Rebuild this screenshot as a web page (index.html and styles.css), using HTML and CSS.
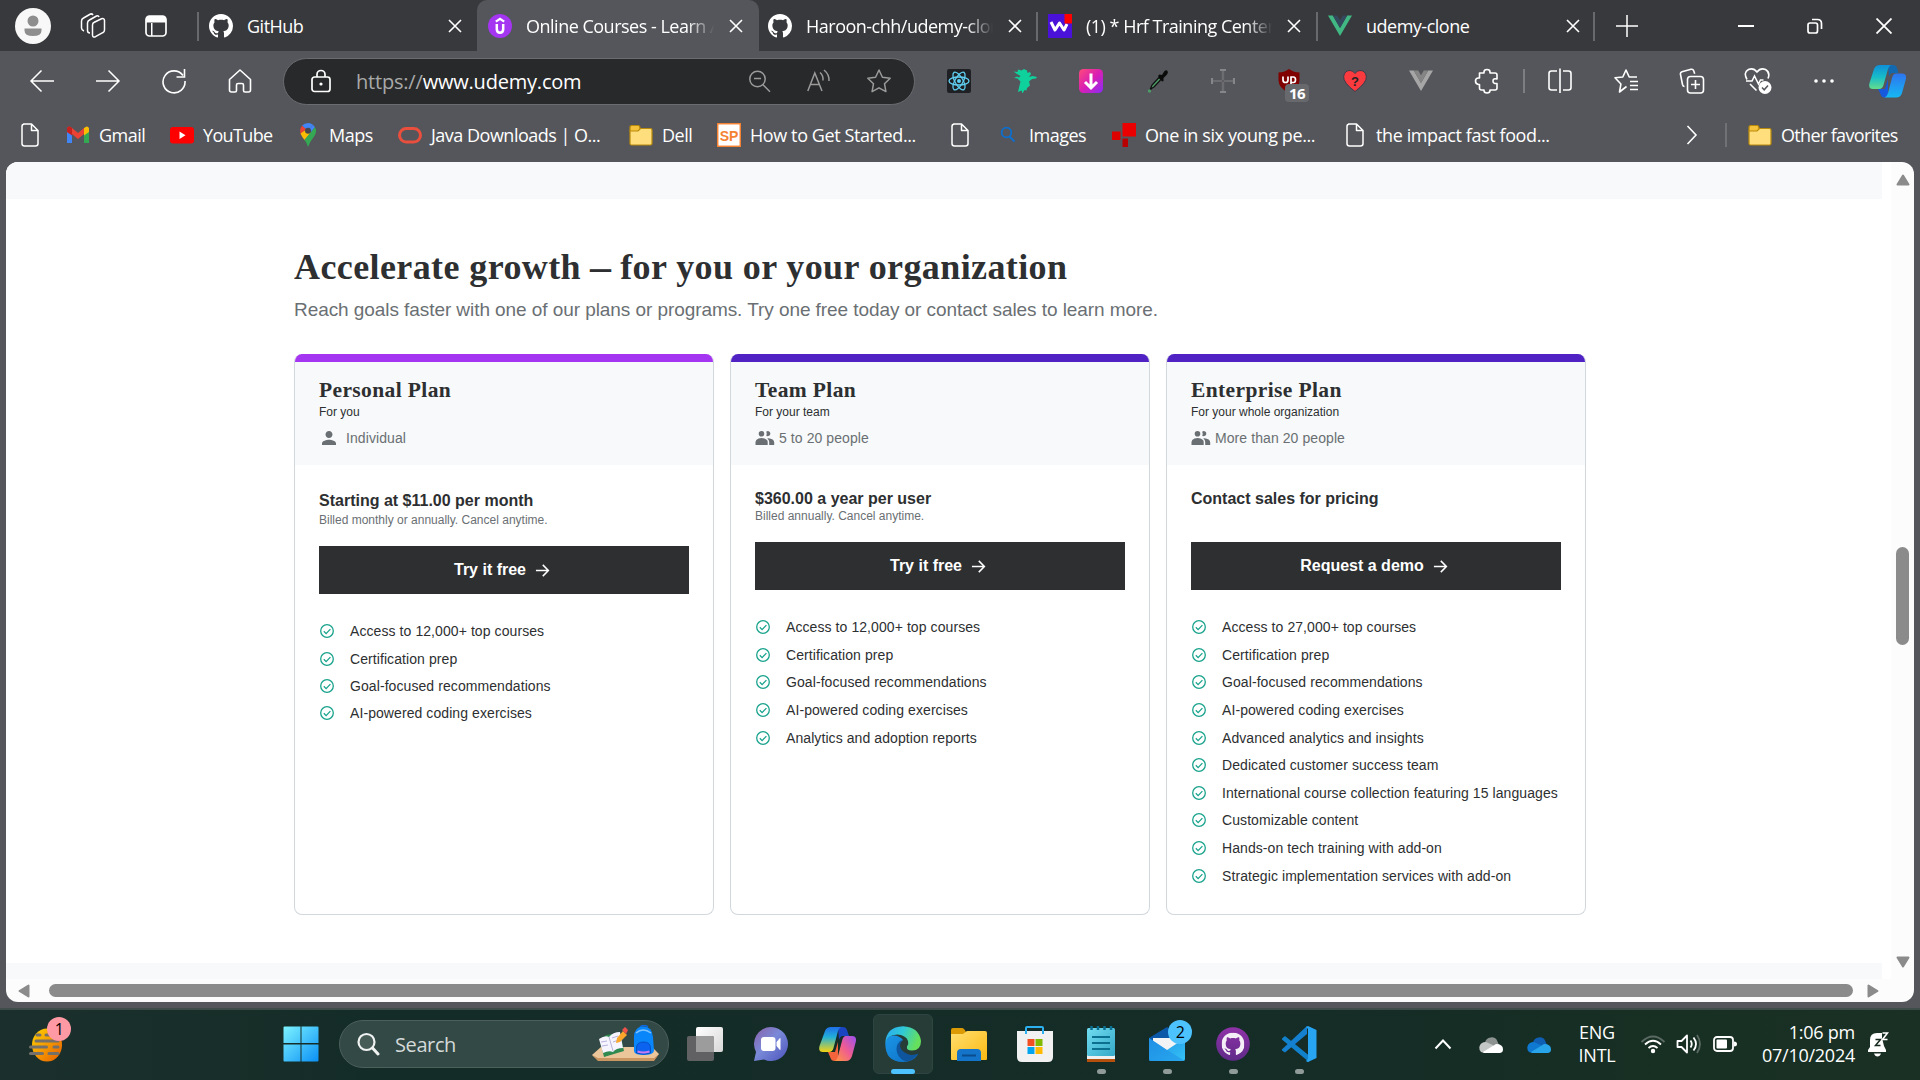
FILE: index.html
```html
<!DOCTYPE html>
<html lang="en">
<head>
<meta charset="utf-8">
<title>Online Courses - Learn Anything</title>
<link rel="stylesheet" href="styles.css">
</head>
<body>
<svg class="defs" width="0" height="0" aria-hidden="true">
  <defs>
    <linearGradient id="g-start" x1="0" y1="0" x2="1" y2="1"><stop offset="0" stop-color="#7df3ff"/><stop offset="1" stop-color="#0a90f5"/></linearGradient>
    <linearGradient id="g-burger" x1="0" y1="0" x2="1" y2="1"><stop offset="0" stop-color="#ffd400"/><stop offset="1" stop-color="#e85c00"/></linearGradient>
    <linearGradient id="g-chat" x1="0" y1="0" x2="1" y2="1"><stop offset="0" stop-color="#8b5fa8"/><stop offset=".45" stop-color="#7a8ad8"/><stop offset="1" stop-color="#4b53bc"/></linearGradient>
    <linearGradient id="g-copl" x1="0" y1="0" x2="0" y2="1"><stop offset="0" stop-color="#1f6fe8"/><stop offset=".4" stop-color="#22b0d8"/><stop offset="1" stop-color="#f5d312"/></linearGradient>
    <linearGradient id="g-copr" x1="1" y1="0" x2="0" y2="1"><stop offset="0" stop-color="#9a50f0"/><stop offset=".5" stop-color="#ef5c92"/><stop offset="1" stop-color="#ff9a3c"/></linearGradient>
    <linearGradient id="g-cbl" x1="0" y1="0" x2="0" y2="1"><stop offset="0" stop-color="#0e8fd8"/><stop offset=".5" stop-color="#17bcc9"/><stop offset="1" stop-color="#63dd8c"/></linearGradient>
    <linearGradient id="g-cbr" x1="0" y1="0" x2="0" y2="1"><stop offset="0" stop-color="#2e74ee"/><stop offset="1" stop-color="#16b8f4"/></linearGradient>
    <linearGradient id="g-edge" x1="0" y1="0" x2="1" y2=".3"><stop offset="0" stop-color="#2aa8f2"/><stop offset=".5" stop-color="#2fc8d8"/><stop offset="1" stop-color="#66e05c"/></linearGradient>
    <linearGradient id="g-edge2" x1="0" y1="0" x2="1" y2="1"><stop offset="0" stop-color="#1b95e6"/><stop offset="1" stop-color="#0c6fc4"/></linearGradient>
    <linearGradient id="g-folder" x1="0" y1="0" x2="1" y2="1"><stop offset="0" stop-color="#ffdf70"/><stop offset="1" stop-color="#fcb912"/></linearGradient>
    <linearGradient id="g-note" x1="0" y1="0" x2="1" y2="1"><stop offset="0" stop-color="#72dcf0"/><stop offset="1" stop-color="#34a9c8"/></linearGradient>
    <linearGradient id="g-dl" x1="0" y1="0" x2="1" y2="1"><stop offset="0" stop-color="#ff4a7a"/><stop offset=".5" stop-color="#d91fb4"/><stop offset="1" stop-color="#8a2cf5"/></linearGradient>
    <linearGradient id="g-mail" x1="0" y1="0" x2="1" y2="1"><stop offset="0" stop-color="#1f90e6"/><stop offset="1" stop-color="#35c3f5"/></linearGradient>
    <linearGradient id="g-gh" x1="0" y1="0" x2="0" y2="1"><stop offset="0" stop-color="#8f32a8"/><stop offset="1" stop-color="#5f2a88"/></linearGradient>
    <linearGradient id="g-task" x1="0" y1="0" x2="1" y2="1"><stop offset="0" stop-color="#ffffff"/><stop offset="1" stop-color="#d8d8d8"/></linearGradient>
  </defs>
  <symbol id="github" viewBox="0 0 16 16"><path d="M8 0C3.58 0 0 3.58 0 8c0 3.54 2.29 6.53 5.47 7.59.4.07.55-.17.55-.38 0-.19-.01-.82-.01-1.49-2.01.37-2.53-.49-2.69-.94-.09-.23-.48-.94-.82-1.13-.28-.15-.68-.52-.01-.53.63-.01 1.08.58 1.23.82.72 1.21 1.87.87 2.33.66.07-.52.28-.87.51-1.07-1.78-.2-3.64-.89-3.64-3.95 0-.87.31-1.59.82-2.15-.08-.2-.36-1.02.08-2.12 0 0 .67-.21 2.2.82.64-.18 1.32-.27 2-.27.68 0 1.36.09 2 .27 1.53-1.04 2.2-.82 2.2-.82.44 1.1.16 1.92.08 2.12.51.56.82 1.27.82 2.15 0 3.07-1.87 3.75-3.65 3.95.29.25.54.73.54 1.48 0 1.07-.01 1.93-.01 2.2 0 .21.15.46.55.38A8.013 8.013 0 0016 8c0-4.42-3.58-8-8-8z"/></symbol>
  <symbol id="close" viewBox="0 0 14 14"><path d="M1 1l12 12M13 1L1 13" fill="none" stroke="#fff" stroke-width="1.6"/></symbol>
  <symbol id="page" viewBox="0 0 24 24"><path d="M5.500 1h8l6.500 6.500v13a2.500 2.500 0 0 1-2.500 2.500h-11a2.500 2.500 0 0 1-2.500-2.500v-17a2.500 2.500 0 0 1 2.500-2.500zM13.500 1v6.500h6.500" fill="none" stroke="#fff" stroke-width="1.500" stroke-linejoin="round"/></symbol>
  <symbol id="folder" viewBox="0 0 24 24"><path d="M1 4.500q0-2 2-2h6q2 0 2 3v3H1z" fill="#f5c23c" stroke="#b98a0c" stroke-width="1.200"/><path d="M1 8h8l2.500-2.500h10q1.500 0 1.500 1.500v13.500q0 1.500-1.500 1.500h-19q-1.500 0-1.500-1.500z" fill="#ffde7d" stroke="#b98a0c" stroke-width="1.200"/></symbol>
  <symbol id="check" viewBox="0 0 16 16"><g fill="none" stroke="#19a38c" stroke-width="1.300"><circle cx="8" cy="8" r="6.300"/><path d="M4.800 8.300l2.300 2.300 4.300-4.500"/></g></symbol>
  <symbol id="arrow" viewBox="0 0 16 16"><path d="M1 8h13M8.300 2l6 6-6 6" fill="none" stroke="#fff" stroke-width="1.600"/></symbol>
  <symbol id="group" viewBox="0 0 20 16"><path d="M6.500 1a2.800 2.800 0 0 1 0 5.600a2.800 2.800 0 0 1 0-5.600zM13 1a2.600 2.600 0 1 1-1.800 4.700q1-1.900 0-4A2.600 2.600 0 0 1 13 1zM.5 12q0-2.300 3-3.400 3.200-1 6 0Q12.700 9.700 12.700 12v3H.500zM13.300 8.300q5.700.5 5.900 4v2.700h-5v-3q0-2.200-2-3.500z" fill="#6a6f73"/></symbol>
  <symbol id="person" viewBox="4 4 16 16"><path d="M12 12c2.210 0 4-1.790 4-4s-1.790-4-4-4-4 1.790-4 4 1.790 4 4 4zm0 2c-2.670 0-8 1.340-8 4v2h16v-2c0-2.660-5.330-4-8-4z" fill="#6a6f73"/></symbol>
  <symbol id="cloud-back" viewBox="0 0 24 17"><path d="M6 7a6.500 6.500 0 0 1 12.500-1.500L20 9 7 10z"/></symbol>
</svg>

<header class="tabstrip">
  <div class="tab-tools">
    <svg class="avatar" viewBox="0 0 36 36"><circle cx="18" cy="18" r="18" fill="#f8f8f8"/><circle cx="18" cy="13" r="5.500" fill="#8e8e8e"/><path d="M9.500 20.500h17v2q0 5.500-8.500 5.500t-8.500-5.500z" fill="#8e8e8e"/></svg>
    <svg class="ic26" viewBox="0 0 26 26"><g fill="none" stroke="#fff" stroke-width="1.500" stroke-linejoin="round"><path d="M12.500 12q0-2 1.800-2.800l7.200-3.400q3-.8 3 1.800v9.500q0 1.800-1.800 2.600l-7.200 4q-3 1-3-1.600z"/><path d="M10 20q-2.500 0-2.500-2.500V10q0-2 2-3l7-4q2-.6 2.500 1"/><path d="M4 18q-2.500-1-2.500-3V8q0-2 2-3l7-4q1.500-.5 2.500 1"/></g></svg>
    <svg class="ic24" viewBox="0 0 24 24"><rect x="2" y="2" width="20" height="20" rx="3.500" fill="none" stroke="#fff" stroke-width="1.700"/><path d="M2 8.500V5q0-3 3-3h14q3 0 3 3v3.500zM7 8v14h1.500V8z" fill="#fff"/></svg>
  </div>
  <div class="tab edge-left">
    <svg class="ic24 white"><use href="#github"/></svg><span class="tab-title ui">GitHub</span><svg class="x"><use href="#close"/></svg>
  </div>
  <div class="tab active">
    <svg class="ic24" viewBox="0 0 24 24"><circle cx="12" cy="12" r="12" fill="#a435f0"/><path d="M7.800 7.600L12 4.800l4.200 2.800" fill="none" stroke="#fff" stroke-width="2.200"/><path d="M8.800 10v5q0 3.700 3.200 3.700t3.200-3.700v-5" fill="none" stroke="#fff" stroke-width="2.500"/></svg><span class="tab-title ui faded">Online Courses - Learn Anything</span><svg class="x"><use href="#close"/></svg>
  </div>
  <div class="tab after-active">
    <svg class="ic24 white"><use href="#github"/></svg><span class="tab-title ui faded">Haroon-chh/udemy-clone</span><svg class="x"><use href="#close"/></svg>
  </div>
  <div class="tab edge-left">
    <svg class="ic24" viewBox="0 0 24 24"><path d="M0 0h24v24H0z" fill="#4a12d8"/><path d="M3 8l4 8 4.500-7 4.500 7 3-6" fill="none" stroke="#fff" stroke-width="3" stroke-linejoin="round"/><path d="M16.500 0H24v9.500h-7.500z" fill="#f00"/></svg><span class="tab-title ui faded">(1) * Hrf Training Center - web</span><svg class="x"><use href="#close"/></svg>
  </div>
  <div class="tab edge-left edge-right">
    <svg class="ic24" viewBox="0 0 24 24"><path d="M0 1.500h4.800L12 14l7.200-12.500H24L12 22z" fill="#41b883"/><path d="M4.800 1.500h4.400L12 6.300l2.800-4.800h4.400L12 14z" fill="#35495e"/></svg><span class="tab-title ui">udemy-clone</span><svg class="x"><use href="#close"/></svg>
  </div>
  <svg class="plus" viewBox="0 0 22 22"><path d="M11 0v22M0 11h22" stroke="#fff" stroke-width="1.500"/></svg>
  <div class="win-buttons">
    <svg class="ic16" viewBox="0 0 16 16"><path d="M0 8h16" stroke="#fff" stroke-width="2"/></svg>
    <svg class="ic16" viewBox="0 0 16 16"><rect x="1" y="5" width="9.500" height="10" rx="2" fill="none" stroke="#fff" stroke-width="1.700"/><path d="M5 1.500h5.500q4 0 4 4V11" fill="none" stroke="#fff" stroke-width="1.700"/></svg>
    <svg class="ic16" viewBox="0 0 16 16"><path d="M.5.500l15 15M15.500.500l-15 15" stroke="#fff" stroke-width="1.800"/></svg>
  </div>
</header>

<nav class="toolbar">
  <span class="btn"><svg class="ic26" viewBox="0 0 26 26"><path d="M25 13H2M12.500 2.500L2 13l10.500 10.500" fill="none" stroke="#fff" stroke-width="1.500"/></svg></span>
  <span class="btn"><svg class="ic26" viewBox="0 0 26 26"><path d="M1 13h23M13.500 2.500L24 13 13.500 23.500" fill="none" stroke="#fff" stroke-width="1.500"/></svg></span>
  <span class="btn"><svg class="ic26" viewBox="0 0 26 26"><path d="M22 7.500A11 11 0 1 0 24 13M23.500 1v8h-8" fill="none" stroke="#fff" stroke-width="1.600"/></svg></span>
  <span class="btn"><svg class="ic26" viewBox="0 0 26 26"><path d="M2.500 11.500L13 2l10.500 9.500V22q0 2-2 2h-3.500q-1.500 0-1.500-1.500V17q0-1.500-1.500-1.500h-4Q9.500 15.500 9.500 17v5.500Q9.500 24 8 24H4.500q-2 0-2-2z" fill="none" stroke="#fff" stroke-width="1.600" stroke-linejoin="round"/></svg></span>
  <div class="omnibox">
    <svg class="ic24" viewBox="0 0 24 24"><rect x="3" y="8" width="18" height="14.500" rx="2.500" fill="none" stroke="#fff" stroke-width="1.700"/><path d="M8 8V5.500a4 4 0 0 1 8 0V8" fill="none" stroke="#fff" stroke-width="1.700"/><circle cx="12" cy="15" r="1.600" fill="#fff"/></svg>
    <span class="url"><span class="scheme">https://</span>www.udemy.com</span>
    <span class="omni-actions">
      <svg class="ic24" viewBox="0 0 24 24"><g fill="none" stroke="#9b9b9b" stroke-width="1.500"><circle cx="9.500" cy="10" r="7.700"/><path d="M15 15.800l7 7M6 9.500h7"/></g></svg>
      <svg class="ic24" viewBox="0 0 24 24"><g fill="none" stroke="#9b9b9b" stroke-width="1.500"><path d="M.8 22L7.800 4l7.200 18M3.500 15.500h8.800M13 3.500q3.500 3 3 8M17 1q5.500 4.500 5 11"/></g></svg>
      <svg class="ic26" viewBox="0 0 26 26"><path d="M13 2l3.400 7.200 7.800 1-5.700 5.500 1.400 7.900-6.900-3.800-6.900 3.800 1.400-7.900L1.800 10.200l7.800-1z" fill="none" stroke="#9b9b9b" stroke-width="1.500" stroke-linejoin="round"/></svg>
    </span>
  </div>
  <span class="btn"><svg class="ic24" viewBox="0 0 24 24"><rect width="24" height="24" rx="2" fill="#1f2024"/><g fill="none" stroke="#5fd0f2" stroke-width="1.300"><ellipse cx="12" cy="12" rx="10" ry="4"/><ellipse cx="12" cy="12" rx="10" ry="4" transform="rotate(60 12 12)"/><ellipse cx="12" cy="12" rx="10" ry="4" transform="rotate(120 12 12)"/></g><circle cx="12" cy="12" r="2" fill="#5fd0f2"/></svg></span>
  <span class="btn"><svg class="ic24" viewBox="0 0 24 24"><path d="M.5 2.500l4 .5L5 .5l3.500 1L11 0l3 1.500.5 2.500L17 3l1 2-2 3 3.500-1 4.500 1-1 1.500-4 .5-3 2.500 1 4-3 2.500-.5 2.500-2-.5-2 3.500-1-3-3.500 1.500L6 18.500l1.500-6-3-3L1 9l3-1.500 2 1 1.500-1.500L4 5z" fill="#0fd19c"/></svg></span>
  <span class="btn"><svg class="ic24" viewBox="0 0 24 24"><rect width="24" height="24" rx="4.500" fill="url(#g-dl)"/><path d="M12 4.500v14M6 13l6 6 6-6" fill="none" stroke="#fff" stroke-width="3"/></svg></span>
  <span class="btn"><svg class="ic24" viewBox="0 0 24 24"><path d="M5 21l2-5 7-7.500 2 2-7 7.500-2.500 1.500z" fill="#4d9b67" stroke="#111" stroke-width="1.300"/><circle cx="4.500" cy="22" r="1.700" fill="#4d9b67"/><path d="M13 7l1.500-1.500L17 6l2.500-4q2-1.500 3 0t-.5 3.500L18.500 9v3L17 12.500z" fill="#0a0a0a"/></svg></span>
  <span class="btn"><svg class="ic24" viewBox="0 0 24 24"><path d="M12 1v22M1 12h22M9 1h6M9 23h6M1 9v6M23 9v6" stroke="#85868a" stroke-width="2.200" fill="none"/><path d="M12 2v20M2 12h20" stroke="#46474b" stroke-width=".8"/></svg></span>
  <span class="btn ublock"><svg class="ic24" viewBox="0 0 24 24"><path d="M12 0q5 3.500 10.500 3.500v8q0 7.500-10.500 12.500Q1.500 19 1.500 11.500v-8Q7 3.500 12 0z" fill="#800000"/><path d="M6 7.500v3.500q0 2.500 2.500 2.500T11 11V7.500M14 15V8h2.500q2 0 2 2.700t-2 2.800H14" fill="none" stroke="#fff" stroke-width="1.700"/></svg><b class="count">16</b></span>
  <span class="btn"><svg class="ic24" viewBox="0 0 24 24"><path d="M12 22.500Q0 13.500.7 7.500 1.500 1.500 7 1.500q3 0 5 3 2-3 5-3 5.500 0 6.300 6Q24 13.500 12 22.500z" fill="#f93b3f" stroke="#333a4a" stroke-width=".9"/><text x="12" y="17" class="qmark">?</text></svg></span>
  <span class="btn"><svg class="ic24" viewBox="0 0 24 24"><path d="M0 1.500h4.800L12 14l7.200-12.500H24L12 22z" fill="#a6a6a6"/><path d="M4.800 1.500h4.400L12 6.300l2.800-4.800h4.400L12 14z" fill="#858585"/></svg></span>
  <span class="btn"><svg class="ic26" viewBox="0 0 26 26"><path d="M5.500 5H10V4q0-2.500 3-2.500T16 4v1h5q2 0 2 2v4q-4-1-4 2t4 2.500V20q0 2-2 2h-5v.5q0 2.500-3 2.500t-3-2.500V22H7.500q-2 0-2-2v-3.500H4.500Q1.500 16 1.500 13t3-3h1z" fill="none" stroke="#fff" stroke-width="1.600" stroke-linejoin="round"/></svg></span>
  <i class="bar"></i>
  <span class="btn"><svg class="ic26" viewBox="0 0 26 26"><path d="M10 3H4.500Q2 3 2 5.500v14Q2 22 4.500 22H10M16 3h5.500Q24 3 24 5.500v14q0 2.500-2.500 2.500H16M13 .5V25" fill="none" stroke="#fff" stroke-width="1.600"/></svg></span>
  <span class="btn"><svg class="ic26" viewBox="0 0 26 26"><path d="M13.500 18.500L6.500 24l1.400-8L2 9.800l7.800-.8L13 2l3.200 7H24M17 13.500h8M17 17.500h8M17 21.500h8" fill="none" stroke="#fff" stroke-width="1.600" stroke-linejoin="round"/></svg></span>
  <span class="btn"><svg class="ic26" viewBox="0 0 26 26"><g fill="none" stroke="#fff" stroke-width="1.600"><rect x="8.500" y="8.500" width="16" height="16.500" rx="3"/><path d="M16.500 12v9M12 16.500h9M5.500 18.500q-1.500 0-2-2L1.500 6.500q-.5-2 1.500-2.700l9-2.500q2-.5 2.700 1.500l1 3"/></g></svg></span>
  <span class="btn"><svg class="ic28" viewBox="0 0 28 28"><path d="M3 12.500q-4-7 1.500-10 5-2 8.500 2.500 3.500-4.500 8.500-2.500 5 3 2.500 9M2 14h6l2.500-5 4 8 2-4h3M6 17l6.500 6.500" fill="none" stroke="#fff" stroke-width="1.600"/><circle cx="21" cy="20.500" r="6.500" fill="#fff"/><path d="M18 20.500l2.200 2.300 3.800-4.300" fill="none" stroke="#55565b" stroke-width="1.500"/></svg></span>
  <span class="btn"><svg class="ic24" viewBox="0 0 24 24"><g fill="#fff"><circle cx="4" cy="12" r="1.800"/><circle cx="12" cy="12" r="1.800"/><circle cx="20" cy="12" r="1.800"/></g></svg></span>
  <span class="copilot"><svg width="37" height="33" viewBox="0 0 37 33"><path d="M19 0h5q3 0 4 3l1.500 5H24q-3 0-4 4z" fill="#1369b0"/><path d="M9 24h7l3-10v15q-1 3.500-3.500 3.500-3 0-4-3.500z" fill="#1659dc"/><path d="M5 4q1.500-4 6-4h11q-2 1-3 4l-4.500 16q-1 4-4.500 4H4q-5 0-3.500-6z" fill="url(#g-cbl)"/><path d="M27 8.500h6q5.500 0 3.500 7L33 28q-1.500 4.500-6 4.500H15.500q2.500-1 3.500-4.500l4-15q1-4.500 4-4.500z" fill="url(#g-cbr)"/></svg></span>
</nav>

<nav class="bookmarks ui">
  <span class="bm"><svg class="ic24"><use href="#page"/></svg></span>
  <span class="bm"><svg class="ic24" viewBox="0 0 24 24"><path d="M1 5.500V20h5V10.500z" fill="#4285f4"/><path d="M23 5.500V20h-5V10.500z" fill="#34a853"/><path d="M1 9V6Q1 3.500 3.500 3.500L6 5l6 5 6-5v6l-6 5-6-5z" fill="#ea4335"/><path d="M1 9V6q0-2.500 2.500-2.500L6 5v7.500z" fill="#c5221f"/><path d="M23 9V6q0-2.500-2.500-2.500L18 5v7.500z" fill="#fbbc04"/></svg><span>Gmail</span></span>
  <span class="bm tight"><svg class="ic24" viewBox="0 0 24 24"><rect y="4" width="24" height="16.500" rx="3" fill="#f00"/><path d="M9.500 8.500v7.500l6-3.700z" fill="#fff"/></svg><span>YouTube</span></span>
  <span class="bm"><svg class="ic24" viewBox="0 0 24 24"><path d="M12 0a8 8 0 0 0-6 2.800l6 5.200 5-6.300A8 8 0 0 0 12 0z" fill="#4285f4"/><path d="M6 2.800Q3 6.500 4.800 11.500L10 6z" fill="#ea4335"/><path d="M4.500 10.500Q6 14 8.500 17l6.500-7.500-4-3.500z" fill="#fbbc04"/><path d="M18.800 4Q22 9 17 15q-3 3.500-5 9-1-4-3.500-7z" fill="#34a853"/><path d="M12 8l5-6.300L18.800 4 15 9z" fill="#4285f4"/><circle cx="12" cy="7.700" r="3" fill="#47484d"/></svg><span>Maps</span></span>
  <span class="bm"><svg class="ic24" viewBox="0 0 24 24"><rect x="1.500" y="5.500" width="21" height="13.500" rx="6.700" fill="none" stroke="#ea4e3c" stroke-width="3"/></svg><span>Java Downloads | O...</span></span>
  <span class="bm"><svg class="ic24"><use href="#folder"/></svg><span>Dell</span></span>
  <span class="bm loose"><svg class="ic24" viewBox="0 0 24 24"><rect x=".7" y=".7" width="22.600" height="22.600" fill="#fff" stroke="#f58232" stroke-width="1.500"/><text x="12" y="17.500" class="sp">SP</text></svg><span>How to Get Started...</span></span>
  <span class="bm"><svg class="ic24"><use href="#page"/></svg></span>
  <span class="bm"><svg class="ic24" viewBox="0 0 24 24"><circle cx="10.500" cy="9.500" r="4.800" fill="none" stroke="#0c6fd0" stroke-width="1.800"/><path d="M13.500 13.500l5 5" stroke="#0c6fd0" stroke-width="2"/></svg><span>Images</span></span>
  <span class="bm loose"><svg class="ic24" viewBox="0 0 24 24"><path d="M10.500 0H24v13.500H10.500z" fill="#ea0000"/><path d="M0 8.500h8.500V17H0z" fill="#d00"/><path d="M10.500 15.500H16V24h-5.500z" fill="#b80000"/></svg><span>One in six young pe...</span></span>
  <span class="bm loose"><svg class="ic24"><use href="#page"/></svg><span>the impact fast food...</span></span>
  <span class="more"><svg width="12" height="20" viewBox="0 0 12 20"><path d="M1.500 1L10 10l-8.500 9" fill="none" stroke="#fff" stroke-width="1.600"/></svg><i class="bar"></i></span>
  <span class="bm tight"><svg class="ic24"><use href="#folder"/></svg><span>Other favorites</span></span>
</nav>

<div class="frame">
  <main class="page">
    <div class="band top"></div>
    <section class="plans">
      <h2>Accelerate growth <span class="dash">—</span> for you or your organization</h2>
      <p class="lead">Reach goals faster with one of our plans or programs. Try one free today or contact sales to learn more.</p>
      <div class="cards">
        <article class="card personal">
          <div class="card-head"><h3>Personal Plan</h3><p class="sub">For you</p><p class="who solo"><svg width="14" height="14"><use href="#person"/></svg><span>Individual</span></p></div>
          <div class="card-body"><p class="price">Starting at $11.00 per month</p><p class="bill">Billed monthly or annually. Cancel anytime.</p>
            <a class="cta"><span>Try it free</span><svg><use href="#arrow"/></svg></a>
            <ul>
              <li><svg><use href="#check"/></svg><span>Access to 12,000+ top courses</span></li>
              <li><svg><use href="#check"/></svg><span>Certification prep</span></li>
              <li><svg><use href="#check"/></svg><span>Goal-focused recommendations</span></li>
              <li><svg><use href="#check"/></svg><span>AI-powered coding exercises</span></li>
            </ul></div>
        </article>
        <article class="card">
          <div class="card-head"><h3>Team Plan</h3><p class="sub">For your team</p><p class="who"><svg width="20" height="16"><use href="#group"/></svg><span>5 to 20 people</span></p></div>
          <div class="card-body"><p class="price">$360.00 a year per user</p><p class="bill">Billed annually. Cancel anytime.</p>
            <a class="cta"><span>Try it free</span><svg><use href="#arrow"/></svg></a>
            <ul>
              <li><svg><use href="#check"/></svg><span>Access to 12,000+ top courses</span></li>
              <li><svg><use href="#check"/></svg><span>Certification prep</span></li>
              <li><svg><use href="#check"/></svg><span>Goal-focused recommendations</span></li>
              <li><svg><use href="#check"/></svg><span>AI-powered coding exercises</span></li>
              <li><svg><use href="#check"/></svg><span>Analytics and adoption reports</span></li>
            </ul></div>
        </article>
        <article class="card">
          <div class="card-head"><h3>Enterprise Plan</h3><p class="sub">For your whole organization</p><p class="who"><svg width="20" height="16"><use href="#group"/></svg><span>More than 20 people</span></p></div>
          <div class="card-body"><p class="price">Contact sales for pricing</p><p class="bill"></p>
            <a class="cta"><span>Request a demo</span><svg><use href="#arrow"/></svg></a>
            <ul>
              <li><svg><use href="#check"/></svg><span>Access to 27,000+ top courses</span></li>
              <li><svg><use href="#check"/></svg><span>Certification prep</span></li>
              <li><svg><use href="#check"/></svg><span>Goal-focused recommendations</span></li>
              <li><svg><use href="#check"/></svg><span>AI-powered coding exercises</span></li>
              <li><svg><use href="#check"/></svg><span>Advanced analytics and insights</span></li>
              <li><svg><use href="#check"/></svg><span>Dedicated customer success team</span></li>
              <li><svg><use href="#check"/></svg><span>International course collection featuring 15 languages</span></li>
              <li><svg><use href="#check"/></svg><span>Customizable content</span></li>
              <li><svg><use href="#check"/></svg><span>Hands-on tech training with add-on</span></li>
              <li><svg><use href="#check"/></svg><span>Strategic implementation services with add-on</span></li>
            </ul></div>
        </article>
      </div>
    </section>
    <div class="band bottom"></div>
  </main>
  <div class="vscroll">
    <svg width="14" height="12" viewBox="0 0 14 12"><path d="M7 1.500l5.500 9h-11z" class="tri"/></svg>
    <i class="vthumb"></i>
    <svg width="14" height="12" viewBox="0 0 14 12"><path d="M7 10.500l5.500-9h-11z" class="tri"/></svg>
  </div>
  <div class="hscroll">
    <svg width="12" height="14" viewBox="0 0 12 14"><path d="M1.500 7l9-5.500v11z" class="tri"/></svg>
    <i class="hthumb"></i>
    <svg width="12" height="14" viewBox="0 0 12 14"><path d="M10.500 7l-9-5.500v11z" class="tri"/></svg>
  </div>
</div>

<footer class="taskbar ui">
  <div class="widget">
    <svg width="36" height="34" viewBox="0 0 36 34"><ellipse cx="18" cy="17" rx="15" ry="16.500" fill="url(#g-burger)"/><path d="M8 7h3M17 7h4M7 13h22M1.500 19h16M25 19h4M1.500 25.500h12M20 25.500h9" stroke="#76706b" stroke-width="3" stroke-linecap="round"/></svg>
    <span class="badge pink">1</span>
  </div>
  <span class="app start"><svg width="36" height="36" viewBox="0 0 36 36"><path d="M1.500.500h16v16.500h-17V1.500q0-1 1-1zM18.500.500h16q1 0 1 1V17h-17zM.5 18.500h17v17h-16q-1 0-1-1zM18.500 18.500h17v16q0 1-1 1h-16z" fill="url(#g-start)"/></svg></span>
  <div class="search">
    <svg width="24" height="24" viewBox="0 0 24 24"><circle cx="10.500" cy="10" r="8" fill="#ffffff1a" stroke="#f0f3f2" stroke-width="2.200"/><path d="M16.500 16l5.500 6" stroke="#f0f3f2" stroke-width="3" stroke-linecap="round"/></svg>
    <span>Search</span>
    <svg class="art" width="68" height="38" viewBox="0 0 68 38"><path d="M0 30l9-8h51l7 7-5 6H6z" fill="#ecc69b"/><path d="M0 30l6 3h56l5-4-5 7H6z" fill="#c99561"/><path d="M8 16l6-6 14-2 4 18-20 6z" fill="#2f8a50"/><path d="M7 14q6-4 10-2 4-5 11-5l3 16q-7 0-10 4-4-2-10 1z" fill="#f6f4ff"/><path d="M17 12l4 14M9 17l6-1M10 21l6-1M20 13l6-2M21 17l6-2" stroke="#b9b2da" stroke-width="1"/><path d="M31 6l4 4-7 7-4 1 1-5z" fill="#f9a62b"/><path d="M30 5l3-3 3 3-2 4z" fill="#f0534a"/><path d="M48 2q4-3 8 0" stroke="#0b6be8" stroke-width="1.500" fill="none"/><path d="M42 12q0-10 9-10.500t10 10.500l1 14q-1 4-10 4-10 0-10-4z" fill="#0a86fb"/><path d="M44 8q7-6 15 0" fill="none" stroke="#7fc4ff" stroke-width="1.500"/><path d="M44.500 28v-5q0-6 7-6t7 6v5q-7 2.500-14 0z" fill="#0b63f0" stroke="#0648b8" stroke-width=".8"/><path d="M45.500 26.500q6 2 12 0" stroke="#c77bf0" stroke-width="2" fill="none"/></svg>
  </div>
  <span class="app"><svg width="36" height="34" viewBox="0 0 36 34"><rect x="9" y="0" width="27" height="25" rx="2" fill="url(#g-task)"/><rect x="0" y="9" width="27" height="25" rx="2" fill="#616163"/><path d="M9 9h16q2 0 2 2v14H9z" fill="#9c9c9d"/></svg></span>
  <span class="app"><svg width="36" height="36" viewBox="0 0 36 36"><path d="M18 1a17 17 0 1 1-7 32.500L1 35l2-9A17 17 0 0 1 18 1z" fill="url(#g-chat)"/><rect x="8" y="11" width="14.500" height="14" rx="3" fill="#fff"/><path d="M24 16l3-3.500v11L24 20z" fill="#fff" stroke="#fff" stroke-linejoin="round"/></svg></span>
  <span class="app"><svg width="37" height="34" viewBox="0 0 37 34"><path d="M19 0h5q3 0 4 3l2 6h-6q-3 0-4 4z" fill="#1b44c0"/><path d="M9 25h7l3-10v16q-1 3-3.500 3-3 0-4-3z" fill="#f4643c"/><path d="M6 4q1.500-4 6-4h10q-2 1-3 4l-4.500 17q-1 4-4.500 4H4q-5 0-3.500-6z" fill="url(#g-copl)"/><path d="M27 9h6q5.500 0 3.500 7L33 29q-1.500 5-6 5H15.500q2.500-1 3.500-5l4-15q1-5 4-5z" fill="url(#g-copr)"/></svg></span>
  <span class="app current"><svg width="36" height="36" viewBox="0 0 36 36"><path d="M.3 17Q0 36 18 36q10 0 15-7.500-5 2.500-10 1.500Q14 28 14 20q0-4 4-6-4-5-10-4.500Q2 10 .3 17z" fill="url(#g-edge2)"/><path d="M15 15q-5 5-3 11.500Q14.500 34 22 35.500q7-1.500 11.500-8-6 2.500-11 .5Q15 25 15 19q0-3 3-5z" fill="#0f559e"/><path d="M.3 17Q1 1 18 .2 34 1 36 15q0 9.500-9 9.500-6 0-5-4 2-2.500 1-5.500-2-6-11-6.500Q2 9 .3 17z" fill="url(#g-edge)"/></svg></span>
  <span class="app"><svg width="36" height="34" viewBox="0 0 36 34"><path d="M0 3q0-2 2-2h9q2 0 4 4H34v6H0z" fill="#dc9a05"/><path d="M0 7h12l4-3h18q2 0 2 2v26q0 1-1 1H1q-1 0-1-1z" fill="url(#g-folder)"/><path d="M6 34V26q0-4 4-4h16q4 0 4 4v8z" fill="#1474ca"/><path d="M11 28.500h14" stroke="#0a4c8c" stroke-width="2"/></svg></span>
  <span class="app"><svg width="36" height="36" viewBox="0 0 36 36"><path d="M9 6V2q0-1 1-1h15q1 0 1 1v5" fill="none" stroke="#2cb0ef" stroke-width="2"/><path d="M0 5h36v26q0 5-5 5H5q-5 0-5-5z" fill="#f1f1f1"/><path d="M9 5v3M26 5v3" stroke="#2cb0ef" stroke-width="2"/><path d="M10.500 13h7v7h-7z" fill="#f25022"/><path d="M18.500 13h7v7h-7z" fill="#7fba00"/><path d="M10.500 21h7v7h-7z" fill="#00a4ef"/><path d="M18.500 21h7v7h-7z" fill="#ffb900"/></svg></span>
  <span class="app open"><svg width="28" height="36" viewBox="0 0 28 36"><path d="M0 32h28v4H0z" fill="#b5500c"/><path d="M0 29h28v4H0z" fill="#f0f0f0"/><rect y="2" width="28" height="28" rx="1.500" fill="url(#g-note)"/><path d="M4.500 0v4M11 0v4M17.500 0v4M24 0v4" stroke="#0b6f90" stroke-width="2.500"/><path d="M5 11h18M5 17h18M5 23h18" stroke="#0b6f90" stroke-width="2"/></svg></span>
  <span class="app open"><svg width="36" height="34" viewBox="0 0 36 34"><path d="M0 11L18 0l18 11v21H0z" fill="#0b57a8"/><path d="M4 11h28v12H4z" fill="#f1f3f5"/><path d="M0 11l18 12L36 11v21q0 2-2 2H2q-2 0-2-2z" fill="url(#g-mail)"/><path d="M0 11l18 12 18 11H0z" fill="#1f90e6" fill-opacity=".55"/></svg><span class="badge blue">2</span></span>
  <span class="app open"><svg width="34" height="34" viewBox="0 0 34 34"><circle cx="17" cy="17" r="16.800" fill="url(#g-gh)"/><svg x="5.500" y="5.500" width="23" height="23" fill="#f4eef7"><use href="#github"/></svg></svg></span>
  <span class="app open"><svg width="36" height="36" viewBox="0 0 36 36"><path d="M1 12.500l3-2.500 24 19.500V36L1.500 14q-1-.8-.5-1.500z" fill="#1181cc"/><path d="M.8 23.500L26 0v8L4 26.500 1 24.500z" fill="#1480cf"/><path d="M27 0l8.500 4v28L27 36q-1 0-2-1l2-2V3l-2-2z" fill="#27a5f2"/></svg></span>
  <div class="tray">
    <span class="t48"><svg width="18" height="12" viewBox="0 0 18 12"><path d="M1.500 10.500L9 2.500l7.500 8" fill="none" stroke="#fff" stroke-width="2"/></svg></span>
    <span class="t48"><svg width="24" height="17" viewBox="0 0 24 17"><use href="#cloud-back" fill="#8c9391"/><path d="M2 16Q0 14 .3 11 1.500 6 7 6l9 4-8 7H5z" fill="#c3c7c6"/><path d="M4 16l13-8q7 0 7 5.500 0 3-3 3.500H5z" fill="#fff"/></svg></span>
    <span class="t48"><svg width="24" height="17" viewBox="0 0 24 17"><use href="#cloud-back" fill="#0f5fb4"/><path d="M2 16Q0 14 .3 11 1.500 6 7 6l9 4-8 7H5z" fill="#0f78d0"/><path d="M4 16l13-8q7 0 7 5.500 0 3-3 3.500H5z" fill="#28a5ea"/></svg></span>
    <span class="lang">ENG<br>INTL</span>
    <span class="t36"><svg width="26" height="20" viewBox="0 0 26 20"><g fill="none" stroke="#fff" stroke-width="1.800"><path d="M1.500 8q11.500-11 23 0" stroke="#5a6a63"/><path d="M5 10.500q8-7.500 16 0M8.500 14q4.500-4 9 0"/></g><circle cx="13" cy="17" r="2.200" fill="#fff"/></svg></span>
    <span class="t36"><svg width="26" height="22" viewBox="0 0 26 22"><g fill="none" stroke="#fff" stroke-width="1.800" stroke-linejoin="round"><path d="M1.500 8h4L11 2.500v17L5.500 14h-4zM14.500 7.500q2.500 3.500 0 7M17.500 4.500q5 6.500 0 13"/><path d="M21 2q6 9 0 18" stroke="#5a6a63"/></g></svg></span>
    <span class="t36"><svg width="26" height="18" viewBox="0 0 26 18"><rect x="2" y="2" width="19" height="14" rx="3" fill="none" stroke="#fff" stroke-width="1.800"/><rect x="4.500" y="4.500" width="10.500" height="9" rx="1" fill="#fff"/><path d="M22 6.500q3 0 3 2.500t-3 2.500z" fill="#fff"/></svg></span>
    <span class="clock">1:06 pm<br>07/10/2024</span>
    <svg class="bell" width="22" height="26" viewBox="0 0 22 26"><path d="M3 16V9q0-7 7-7h5v5l2 8 2 4v2H1v-2zM7 22.500h7q-1 3-3.500 3T7 22.500z" fill="#fff"/><path d="M8.500 8.500h5l-5 6h5" fill="none" stroke="#15291f" stroke-width="1.500"/><path d="M15.500 2h5l-5 6.500h5" fill="none" stroke="#fff" stroke-width="1.600"/></svg>
  </div>
</footer>
</body>
</html>
```
FILE: styles.css
```css
* { box-sizing: border-box; }
body, h2, h3, p, ul { margin: 0; padding: 0; }
body { width: 1920px; height: 1080px; overflow: hidden; display: flex; flex-direction: column; background: #55565b; font-family: "Liberation Sans", Arial, sans-serif; color: #2d2f31; }
svg { display: block; flex: none; }
.defs { position: absolute; }
.ui { font-family: "Open Sans", "Noto Sans", sans-serif; font-size: 18px; color: #fff; letter-spacing: -0.5px; }
.ic16 { width: 16px; height: 16px; }
.ic24 { width: 24px; height: 24px; }
.ic26 { width: 26px; height: 26px; }
.ic28 { width: 28px; height: 28px; }
.white { fill: #fff; }

.tabstrip { height: 51px; flex: none; display: flex; align-items: center; background: #38393d; }
.tab-tools { width: 197px; display: flex; align-items: center; gap: 29px; padding-left: 15px; }
.tab-tools .avatar { width: 36px; height: 36px; }
.tab-tools .ic24 { margin-left: 9px; }
.tab { position: relative; width: 280px; height: 51px; flex: none; display: flex; align-items: center; gap: 14px; padding: 0 15px 0 11px; }
.tab .x { width: 14px; height: 14px; }
.tab.active { width: 282px; padding-right: 16px; background: #55565b; border-radius: 10px 10px 0 0; }
.tab.after-active { width: 277px; padding: 0 14px 0 9px; }
.tab-title { flex: 1; min-width: 0; overflow: hidden; white-space: nowrap; }
.faded { margin-right: -3px; -webkit-mask-image: linear-gradient(90deg, #000 84%, transparent 98%); mask-image: linear-gradient(90deg, #000 84%, transparent 98%); }
.edge-left { border-left: 1px solid transparent; }
.edge-left::before, .edge-right::after { content: ""; position: absolute; left: -1px; top: 12px; width: 2px; height: 29px; background: #68696d; }
.edge-right::after { left: auto; right: 1px; }
.tab.edge-right { padding-right: 16px; }
.plus { width: 22px; height: 22px; margin-left: 20px; }
.win-buttons { display: flex; gap: 53px; margin-left: 100px; }

.toolbar { height: 60px; flex: none; display: flex; align-items: center; padding-left: 9px; }
.btn { width: 66px; flex: none; display: flex; justify-content: center; }
.omnibox { width: 632px; height: 47px; margin: 0 11px 0 10px; display: flex; align-items: center; border: 1px solid #6b6c70; border-radius: 24px; background: #28292a; padding: 0 22px 0 25px; }
.url { margin-left: 23px; font-family: "Open Sans", "Noto Sans", sans-serif; font-size: 20px; letter-spacing: -0.200px; color: #fff; }
.scheme { color: #a9a9a9; }
.omni-actions { margin-left: auto; display: flex; align-items: center; gap: 35px; }
.toolbar > .bar { width: 2px; height: 24px; margin: 0 2px 0 3px; background: #7d7e82; }
.ublock { position: relative; }
.count { position: absolute; left: 29px; top: 15px; padding: 0 4px; font: bold 15px/18px "Open Sans", sans-serif; letter-spacing: -0.5px; color: #fff; background: #68696d; border-radius: 4px; }
.qmark { font: bold 13px "Liberation Sans", sans-serif; text-anchor: middle; fill: #222; }
.sp { font: bold 14px "Liberation Sans", sans-serif; letter-spacing: 0; text-anchor: middle; fill: #f58232; }
.copilot { width: 60px; display: flex; justify-content: center; }

.bookmarks { height: 51px; flex: none; display: grid; grid-template-columns: 48px 104px 126px 102px 231px 88px 231px 48px 116px 231px 343px 62px 1fr; align-items: center; padding: 0 0 4px 18px; }
.bm { display: flex; align-items: center; gap: 9px; white-space: nowrap; }
.bm.tight { letter-spacing: -0.650px; }
.bm.loose { letter-spacing: -0.400px; }
.more { display: flex; align-items: center; gap: 27px; }
.more .bar { width: 2px; height: 24px; background: #707175; }

.frame { width: 1908px; height: 840px; flex: none; margin: 0 6px; display: grid; grid-template: 817px 23px / 1885px 23px; background: #fcfcfc; border-radius: 12px; overflow: hidden; }
.page { background: #fff; display: flex; flex-direction: column; }
.band { width: 1876px; background: #f7f9fa; }
.band.top { height: 37px; }
.band.bottom { height: 16px; }
.plans { flex: 1; padding: 45px 0 0 288px; }
h2 { font: bold 36px/46px "Liberation Serif", "Times New Roman", serif; letter-spacing: 0.400px; white-space: nowrap; }
.dash { font-size: 20px; line-height: 20px; vertical-align: 3px; -webkit-text-stroke: 1.200px #2d2f31; }
.lead { margin-top: 7px; font-size: 19px; line-height: 26px; letter-spacing: -0.070px; color: #6a6f73; white-space: nowrap; }
.cards { display: flex; gap: 16px; margin-top: 31px; }
.card { width: 420px; height: 561px; border: 1px solid #d1d7dc; border-top: 0; border-radius: 8px; overflow: hidden; }
.card-head { height: 111px; border-top: 8px solid #5022c3; background: #f7f9fa; padding: 15px 24px 0; }
.personal .card-head { border-top-color: #a435f0; }
h3 { font: bold 21.500px/26px "Liberation Serif", "Times New Roman", serif; letter-spacing: 0.380px; }
.sub { margin-top: 1px; font-size: 12px; line-height: 17px; }
.who { display: flex; align-items: center; gap: 4px; margin-top: 7px; font-size: 14px; line-height: 20px; letter-spacing: 0.080px; color: #6a6f73; }
.who.solo { gap: 10px; padding-left: 3px; }
.card-body { padding: 24px 24px 0; white-space: nowrap; }
.personal .card-body { padding-top: 25px; }
.price { font-size: 16px; font-weight: bold; line-height: 20px; }
.bill { height: 14px; font-size: 12px; line-height: 14px; color: #6a6f73; }
.personal .price { line-height: 22px; }
.personal .bill { height: 15px; line-height: 16px; }
.cta { height: 48px; margin-top: 19px; padding-right: 4px; display: flex; align-items: center; justify-content: center; gap: 9px; background: #2d2f31; color: #fff; font-weight: bold; font-size: 16px; }
.cta svg { width: 15px; height: 15px; }
ul { list-style: none; margin-top: 23.500px; }
.personal ul { margin-top: 23.500px; }
li { height: 27.600px; display: flex; align-items: center; gap: 15px; font-size: 14px; letter-spacing: 0.080px; }
.personal li { height: 27.400px; }
li svg { width: 16px; height: 16px; }
.tri { fill: #8b8b8b; stroke: #8b8b8b; stroke-width: 2; stroke-linejoin: round; }
.vscroll { display: flex; flex-direction: column; align-items: center; padding-top: 12px; }
.vthumb { width: 13px; height: 98px; border-radius: 7px; background: #8b8b8b; margin: 361px 0 311px; }
.hscroll { display: flex; align-items: center; padding: 0 0 0 12px; }
.hthumb { width: 1804px; height: 13px; border-radius: 7px; background: #8b8b8b; margin: 0 14px 0 19px; }

.taskbar { height: 72px; flex: none; margin-top: 6px; padding-bottom: 2px; display: flex; align-items: center; border-top: 2px solid #3f4d4a; background: linear-gradient(90deg, #1b302c, #142c27 20%, #152c27 70%, #182f23 88%, #1a3024); }
.widget { position: relative; width: 36px; margin-left: 29px; padding-top: 2px; }
.badge { position: absolute; width: 24px; height: 24px; border-radius: 50%; font-size: 16px; line-height: 24px; text-align: center; color: #000; }
.pink { left: 18px; top: -9px; background: #ff99a4; }
.blue { left: 34px; top: 6px; background: #4cc2ff; }
.app { position: relative; width: 66px; height: 60px; flex: none; display: flex; align-items: center; justify-content: center; }
.app.start { margin-left: 203px; }
.current::before { content: ""; position: absolute; inset: 0 3px; border: 1px solid #2d4440; border-radius: 6px; background: #ffffff14; z-index: 0; }
.current svg { position: relative; }
.current::after, .open::after { content: ""; position: absolute; bottom: 0; left: 21px; width: 24px; height: 5px; border-radius: 3px; background: #4cc2ff; }
.open::after { left: 28.500px; width: 9px; background: #909a98; }
.search { width: 330px; height: 48px; flex: none; margin: 0 3px 0 5px; display: flex; align-items: center; padding: 0 8px 0 16px; border: 1px solid #4c5f5b; border-radius: 24px; background: #334945; font-size: 20px; color: #d5dad9; }
.search > span { margin-left: 15px; letter-spacing: -0.4px; }
.search .art { margin-left: auto; }
.tray { display: flex; align-items: center; margin-left: 87px; line-height: 23px; letter-spacing: -0.250px; }
.t48 { width: 48px; display: flex; justify-content: center; }
.t36 { width: 36px; display: flex; justify-content: center; }
.lang { width: 68px; text-align: center; margin-right: 4px; }
.clock { width: 112px; text-align: right; }
.bell { margin-left: 12px; }
```
